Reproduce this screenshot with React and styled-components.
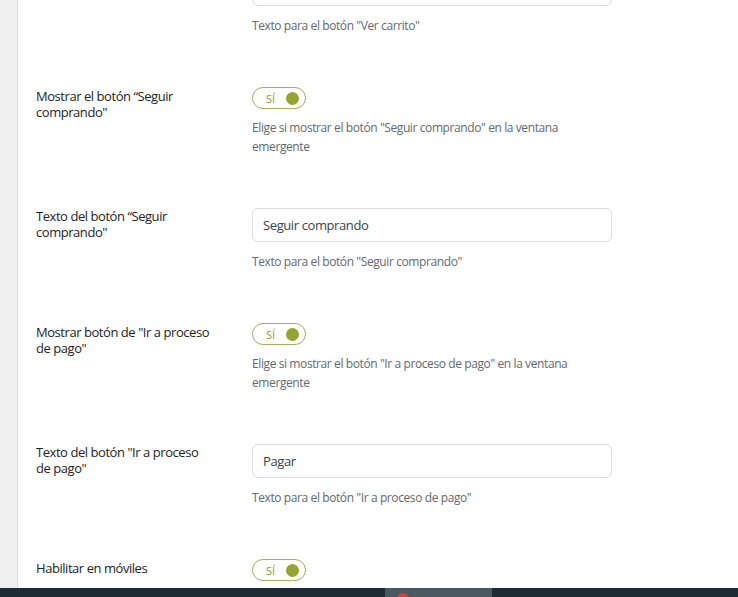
import React from "react";
import styled, { createGlobalStyle } from "styled-components";

const GlobalStyle = createGlobalStyle`
  html, body {
    margin: 0;
    padding: 0;
    height: 100%;
    overflow: hidden;
    background: #f0f0f1;
  }
  body {
    font-family: "Open Sans", "Noto Sans", sans-serif;
  }
`;

const Screen = styled.div`
  display: flex;
  height: 100vh;
  overflow: hidden;
`;

const Gutter = styled.div`
  flex: 0 0 17px;
  background: #f0f0f1;
  border-right: 1px solid #dcdcde;
`;

const Panel = styled.main`
  flex: 1;
  background: #fff;
  overflow: hidden;
`;

const Scroller = styled.div`
  margin-top: -54px;
  padding-left: 18px;
`;

const Row = styled.div`
  display: flex;
  align-items: flex-start;
  padding: 26px 0;
`;

const Label = styled.div`
  flex: 0 0 176px;
  margin-right: 40px;
  font-size: 13px;
  font-weight: 500;
  letter-spacing: -0.45px;
  line-height: 16px;
  color: #1d2327;
  padding-top: ${(p) => (p.$toggle ? "1px" : "0")};
`;

const Control = styled.div`
  display: flex;
  flex-direction: column;
  align-items: flex-start;
`;

const Input = styled.input`
  box-sizing: border-box;
  width: 360px;
  height: 34px;
  padding: 0 10px;
  border: 1px solid #dcdcde;
  border-radius: 6px;
  font-family: inherit;
  font-size: 13px;
  letter-spacing: -0.4px;
  color: #3c434a;
  background: #fff;
  outline: none;
`;

const Toggle = styled.div`
  box-sizing: border-box;
  width: 54px;
  height: 22px;
  border: 1px solid #a4ad62;
  border-radius: 11px;
  display: flex;
  align-items: center;
  justify-content: space-between;
  padding: 0 6px 0 13px;
  background: #fff;
`;

const ToggleText = styled.span`
  font-size: 11px;
  color: #8c9a3c;
  line-height: 1;
`;

const Knob = styled.span`
  width: 13px;
  height: 13px;
  border-radius: 50%;
  background: #94a534;
`;

const Description = styled.p`
  margin: ${(p) => (p.$after === "input" ? "10px" : "9px")} 0 0;
  width: 360px;
  font-size: 12px;
  letter-spacing: -0.4px;
  line-height: 19px;
  color: #646970;
`;

const Taskbar = styled.div`
  position: fixed;
  left: 0;
  right: 0;
  bottom: 0;
  height: 9px;
  background: #1e2b34;
`;

const TaskItem = styled.div`
  position: absolute;
  left: 385px;
  width: 107px;
  height: 100%;
  background: #4c585f;
  overflow: hidden;
  &::after {
    content: "";
    position: absolute;
    left: 12px;
    top: 5px;
    width: 12px;
    height: 12px;
    border-radius: 50%;
    background: #c9473a;
  }
`;

const settings = [
  { type: "input", label: "Texto del botón \"Ver carrito\"", value: "Ver carrito", desc: "Texto para el botón \"Ver carrito\"" },
  { type: "toggle", label: "Mostrar el botón “Seguir comprando\"", desc: "Elige si mostrar el botón \"Seguir comprando\" en la ventana emergente" },
  { type: "input", label: "Texto del botón “Seguir comprando\"", value: "Seguir comprando", desc: "Texto para el botón \"Seguir comprando\"" },
  { type: "toggle", label: "Mostrar botón de \"Ir a proceso de pago\"", desc: "Elige si mostrar el botón \"Ir a proceso de pago\" en la ventana emergente" },
  { type: "input", label: "Texto del botón \"Ir a proceso de pago\"", value: "Pagar", desc: "Texto para el botón \"Ir a proceso de pago\"" },
  { type: "toggle", label: "Habilitar en móviles", desc: "Elige si mostrar la ventana emergente en dispositivos móviles" },
];

const App = () => {
  return (
    <>
      <GlobalStyle />
      <Screen>
        <Gutter />
        <Panel>
          <Scroller>
            {settings.map((s, i) => (
              <Row key={i}>
                <Label $toggle={s.type === "toggle"}>{s.label}</Label>
                <Control>
                  {s.type === "input" ? (
                    <Input defaultValue={s.value} />
                  ) : (
                    <Toggle>
                      <ToggleText>SÍ</ToggleText>
                      <Knob />
                    </Toggle>
                  )}
                  <Description $after={s.type}>{s.desc}</Description>
                </Control>
              </Row>
            ))}
          </Scroller>
        </Panel>
      </Screen>
      <Taskbar>
        <TaskItem />
      </Taskbar>
    </>
  );
};

export default App;
